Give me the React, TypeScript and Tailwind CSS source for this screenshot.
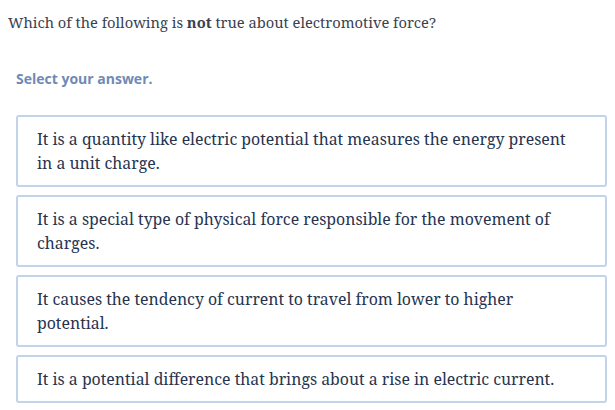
const options = [
  ['It is a quantity like electric potential that measures the energy present', 'in a unit charge.'],
  ['It is a special type of physical force responsible for the movement of', 'charges.'],
  ['It causes the tendency of current to travel from lower to higher', 'potential.'],
  ['It is a potential difference that brings about a rise in electric current.'],
];

export default function App() {
  return (
    <div className="min-h-screen bg-white pt-[10px]">
      <p className="pl-[8px] text-[14.7px] leading-[24px] text-[#3a4150] [font-family:'Noto_Serif',serif]">
        Which of the following is <b className="font-bold">not</b> true about electromotive force?
      </p>

      <p className="mt-[35px] pl-[16px] text-[14px] leading-[19px] font-bold text-[#6f8ab4] [font-family:'Open_Sans',sans-serif]">
        Select your answer.
      </p>

      <div className="mt-[27px] ml-[16px] mr-[8px] flex flex-col gap-[8px]">
        {options.map((lines, i) => (
          <button
            key={i}
            className="text-left rounded-[3px] border-2 border-[#c3d4ea] bg-white py-[10px] px-[19px] text-[15.85px] leading-[24px] text-[#26344f] [font-family:'Noto_Serif',serif]"
          >
            {lines.map((l, j) => (
              <span key={j} className="block">
                {l}
              </span>
            ))}
          </button>
        ))}
      </div>
    </div>
  );
}
